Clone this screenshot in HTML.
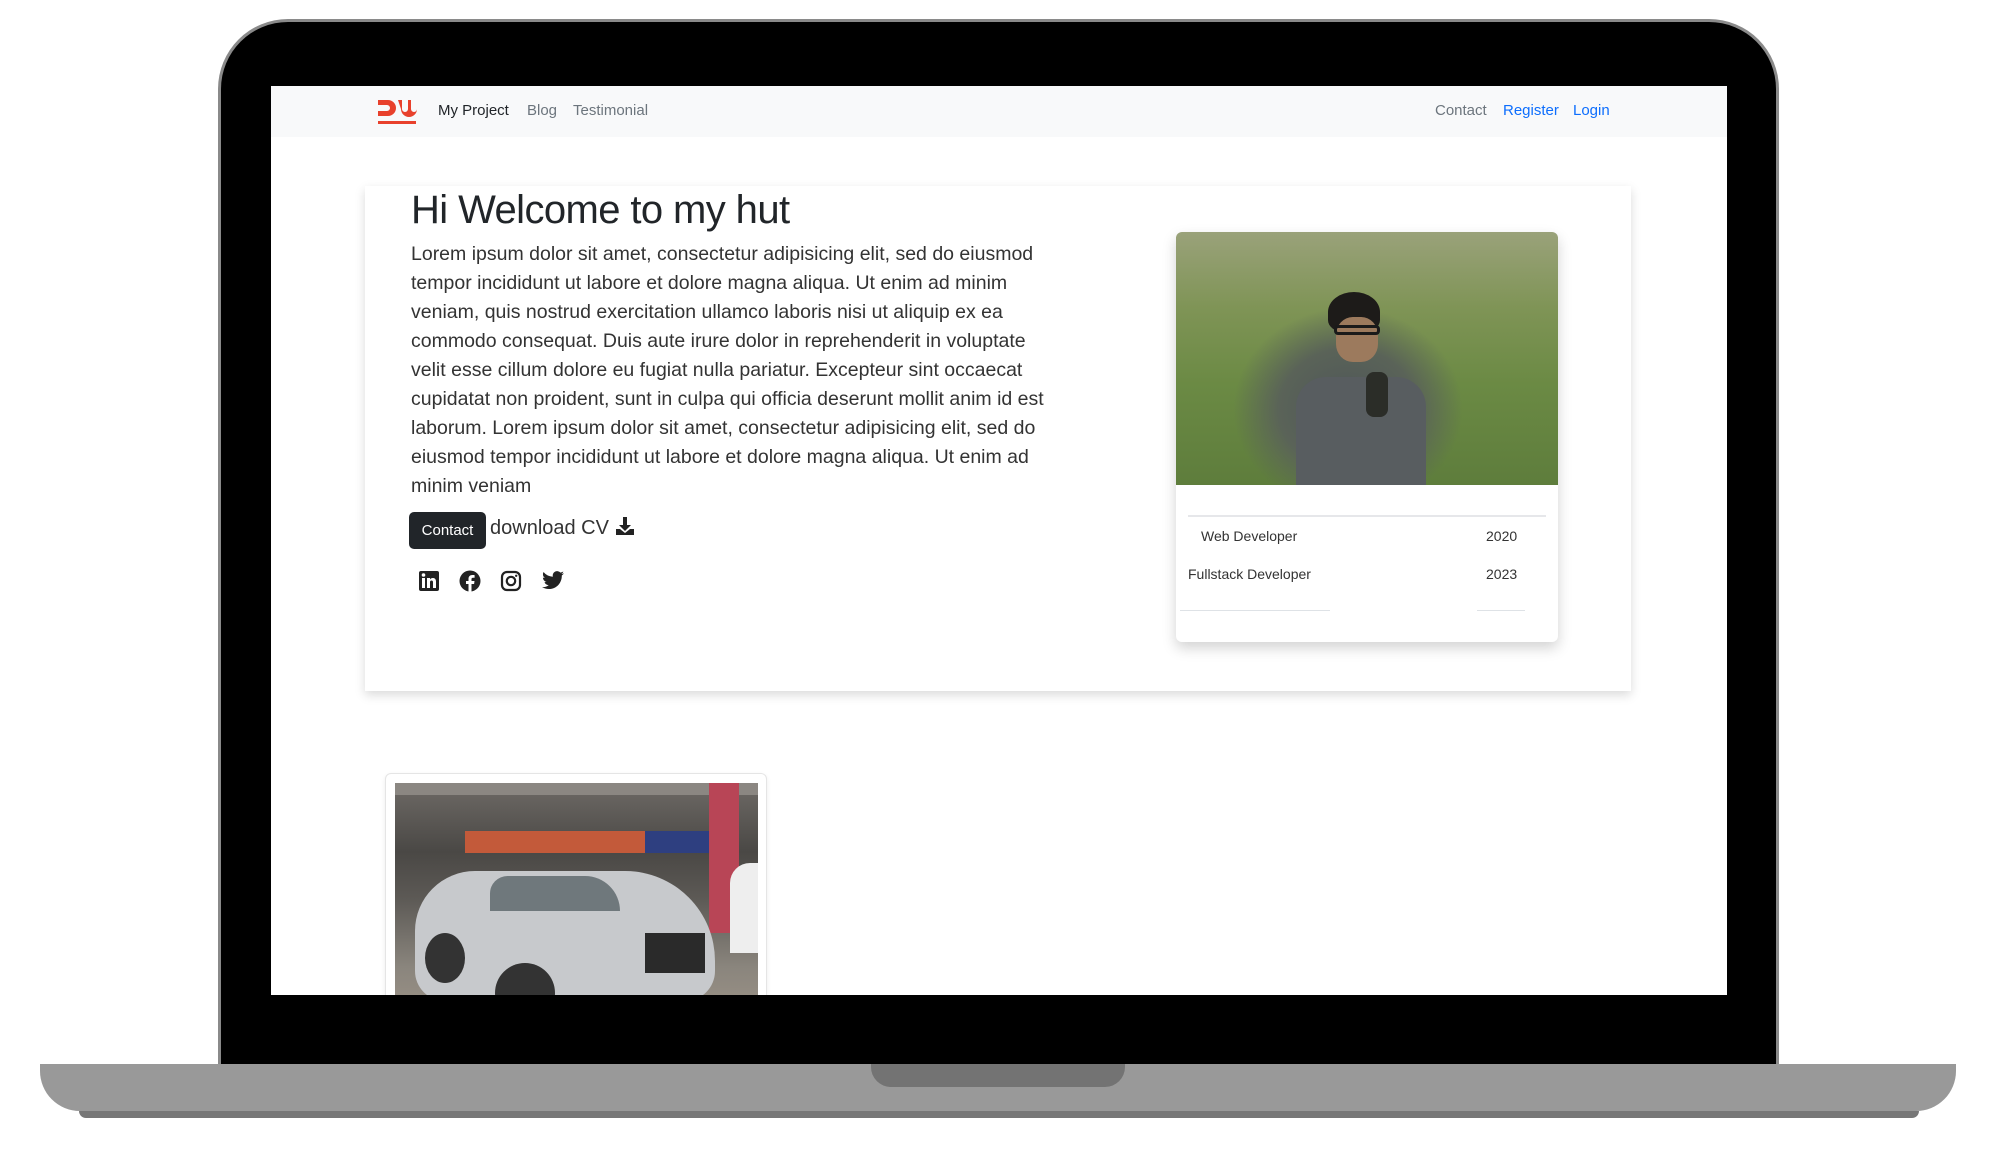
<!DOCTYPE html>
<html><head><meta charset="utf-8"><style>
*{margin:0;padding:0;box-sizing:border-box}
body{width:2000px;height:1149px;background:#fff;position:relative;overflow:hidden;font-family:"Liberation Sans",sans-serif;color:#212529}
.abs{position:absolute}
.bezel{left:218px;top:19px;width:1561px;height:1060px;background:#000;border:3px solid #8a8a8a;border-bottom:none;border-radius:70px 70px 0 0}
.screen{left:271px;top:86px;width:1456px;height:909px;background:#fff;overflow:hidden}
.base{left:40px;top:1064px;width:1916px;height:47px;background:#999;border-radius:0 0 40px 40px}
.shadow{left:79px;top:1111px;width:1840px;height:7px;background:#777;border-radius:0 0 10px 10px}
.notch{left:871px;top:1064px;width:254px;height:23px;background:#737373;border-radius:0 0 20px 20px}
.nav{left:0;top:0;width:1456px;height:51px;background:#f8f9fa}
.nav a{position:absolute;top:16px;font-size:15px;color:#6c757d;text-decoration:none}
.card{left:94px;top:100px;width:1266px;height:505px;background:#fff;box-shadow:0 4px 10px rgba(0,0,0,.15)}
h1{position:absolute;left:46px;top:2px;font-size:40px;font-weight:400;letter-spacing:-0.6px}
p.lead{position:absolute;left:46px;top:54px;width:650px;font-size:19.5px;line-height:29px;color:#333}
.btn{left:44px;top:326px;width:77px;height:37px;background:#212529;color:#fff;border-radius:5px;font-size:15px;text-align:center;line-height:37px}
.pc{left:811px;top:46px;width:382px;height:410px;background:#fff;border-radius:6px;box-shadow:0 6px 14px rgba(0,0,0,.18);overflow:hidden}
.car{left:114px;top:687px;width:382px;height:240px;background:#fff;border:1px solid #e5e5e5;border-radius:6px;box-shadow:0 2px 5px rgba(0,0,0,.08)}
</style></head><body>
<div class="abs bezel"></div>
<div class="abs base"></div>
<div class="abs shadow"></div>
<div class="abs notch"></div>
<div class="abs screen">
 <div class="abs nav">
  <div class="abs" style="left:106px;top:12px;width:40px;height:28px">
   <svg width="40" height="28" viewBox="0 0 40 28"><path d="M1 2h10a8 8 0 0 1 0 16H1v-5h9a3 3 0 0 0 0-6H1z" fill="#e8412c"/><path d="M21 2h4v9a3 3 0 0 0 6 0V2h3v9a3 3 0 0 0 6 0V2h0v9a8 8 0 0 1-16 0z" fill="#e8412c"/><rect x="1" y="23" width="38" height="3" fill="#e8412c"/></svg>
  </div>
  <a style="left:167px;color:#212529">My Project</a>
  <a style="left:256px">Blog</a>
  <a style="left:302px">Testimonial</a>
  <a style="left:1164px">Contact</a>
  <a style="left:1232px;color:#0d6efd">Register</a>
  <a style="left:1302px;color:#0d6efd">Login</a>
 </div>
 <div class="abs card">
  <h1>Hi Welcome to my hut</h1>
  <p class="lead">Lorem ipsum dolor sit amet, consectetur adipisicing elit, sed do eiusmod tempor incididunt ut labore et dolore magna aliqua. Ut enim ad minim veniam, quis nostrud exercitation ullamco laboris nisi ut aliquip ex ea commodo consequat. Duis aute irure dolor in reprehenderit in voluptate velit esse cillum dolore eu fugiat nulla pariatur. Excepteur sint occaecat cupidatat non proident, sunt in culpa qui officia deserunt mollit anim id est laborum. Lorem ipsum dolor sit amet, consectetur adipisicing elit, sed do eiusmod tempor incididunt ut labore et dolore magna aliqua. Ut enim ad minim veniam</p>
  <div class="abs btn">Contact</div>
  <div class="abs" style="left:125px;top:330px;font-size:20px;color:#333">download CV <svg width="20" height="20" viewBox="0 0 20 20" style="vertical-align:-2px"><path d="M8 1h4v8h4l-6 6-6-6h4z" fill="#222"/><path d="M1 13h4l5 4 5-4h4v6H1z" fill="#222"/></svg></div>
  <svg class="abs" style="left:53px;top:384px" width="22" height="22" viewBox="0 0 22 22"><rect x="1" y="1" width="20" height="20" rx="2" fill="#222"/><rect x="4" y="8" width="3" height="10" fill="#fff"/><circle cx="5.5" cy="5" r="1.8" fill="#fff"/><path d="M9 8h3v1.5c1-2 6-2.5 6 2V18h-3v-6c0-2-3-2-3 0v6H9z" fill="#fff"/></svg>
  <svg class="abs" style="left:94px;top:384px" width="22" height="22" viewBox="0 0 22 22"><circle cx="11" cy="11" r="10.5" fill="#222"/><path d="M12.5 22v-8h2.6l.4-3h-3V9.2c0-.9.3-1.5 1.6-1.5h1.5V5.1c-.3 0-1.2-.1-2.3-.1-2.3 0-3.8 1.4-3.8 3.9V11H7v3h2.5v8z" fill="#fff"/></svg>
  <svg class="abs" style="left:135px;top:384px" width="22" height="22" viewBox="0 0 22 22"><rect x="2" y="2" width="18" height="18" rx="5" fill="none" stroke="#222" stroke-width="2.2"/><circle cx="11" cy="11" r="4.2" fill="none" stroke="#222" stroke-width="2.2"/><circle cx="16.2" cy="5.8" r="1.2" fill="#222"/></svg>
  <svg class="abs" style="left:176px;top:384px" width="24" height="22" viewBox="0 0 24 20"><path d="M23 2.3a9 9 0 0 1-2.6.7A4.6 4.6 0 0 0 22.4.5a9 9 0 0 1-2.9 1.1A4.5 4.5 0 0 0 11.8 5.7 12.9 12.9 0 0 1 2.5 1 4.5 4.5 0 0 0 3.9 7 4.5 4.5 0 0 1 1.9 6.5a4.5 4.5 0 0 0 3.6 4.4 4.5 4.5 0 0 1-2 .1 4.5 4.5 0 0 0 4.2 3.1A9 9 0 0 1 1 16a12.8 12.8 0 0 0 6.9 2c8.3 0 12.9-6.9 12.9-12.9v-.6A9 9 0 0 0 23 2.3z" fill="#222"/></svg>
  <div class="abs pc">
   <div class="abs" style="left:0;top:0;width:382px;height:253px;background:radial-gradient(ellipse 30% 40% at 45% 70%,#4e5558 0,#5a6358 60%,transparent 100%),linear-gradient(180deg,#9aa27a 0,#7f9456 30%,#6b8a44 60%,#5e7d3c 100%)"></div>
   <div class="abs" style="left:152px;top:60px;width:52px;height:40px;background:#1d1b19;border-radius:50% 50% 30% 30%"></div>
   <div class="abs" style="left:160px;top:85px;width:42px;height:45px;background:#9c7a5d;border-radius:40%"></div>
   <div class="abs" style="left:158px;top:93px;width:46px;height:10px;border:3px solid #1a1a1a;border-radius:4px"></div>
   <div class="abs" style="left:120px;top:145px;width:130px;height:108px;background:#585d60;border-radius:30px 30px 0 0"></div>
   <div class="abs" style="left:190px;top:140px;width:22px;height:45px;background:#2b2d28;border-radius:8px"></div>
   <div class="abs" style="left:12px;top:283px;width:358px;height:2px;background:#e6e7ea"></div>
   <div class="abs" style="left:25px;top:296px;font-size:14px;color:#333">Web Developer</div>
   <div class="abs" style="left:310px;top:296px;font-size:14px;color:#333">2020</div>
   <div class="abs" style="left:12px;top:334px;font-size:14px;color:#333">Fullstack Developer</div>
   <div class="abs" style="left:310px;top:334px;font-size:14px;color:#333">2023</div>
   <div class="abs" style="left:4px;top:378px;width:150px;height:1px;background:#dee2e6"></div>
   <div class="abs" style="left:301px;top:378px;width:48px;height:1px;background:#dee2e6"></div>
  </div>
 </div>
 <div class="abs car">
  <div class="abs" style="left:9px;top:9px;width:363px;height:230px;background:linear-gradient(180deg,#6e6a66 0,#4a4845 30%,#5c5955 50%,#8a857d 80%,#9a9186 100%);overflow:hidden">
   <div class="abs" style="left:0;top:0;width:363px;height:12px;background:#8b8782"></div>
   <div class="abs" style="left:70px;top:48px;width:180px;height:22px;background:#c35a3a"></div>
   <div class="abs" style="left:250px;top:48px;width:72px;height:22px;background:#2e3f80"></div>
   <div class="abs" style="left:314px;top:0;width:30px;height:150px;background:#b84556"></div>
   <div class="abs" style="left:335px;top:80px;width:40px;height:90px;background:#eeeeee;border-radius:20px 0 0 0"></div>
   <div class="abs" style="left:20px;top:88px;width:300px;height:130px;background:#c7c9cc;border-radius:60px 90px 30px 30px"></div>
   <div class="abs" style="left:95px;top:93px;width:130px;height:35px;background:#6f787c;border-radius:20px 40px 0 0"></div>
   <div class="abs" style="left:100px;top:180px;width:60px;height:60px;background:#333;border-radius:50%"></div>
   <div class="abs" style="left:30px;top:150px;width:40px;height:50px;background:#333;border-radius:50%"></div>
   <div class="abs" style="left:250px;top:150px;width:60px;height:40px;background:#2a2a2a"></div>
  </div>
 </div>
</div>
</body></html>
